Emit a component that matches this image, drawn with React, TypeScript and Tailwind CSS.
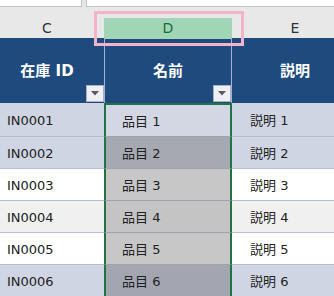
import React from "react";

const rows = [
  { id: "IN0001", name: "品目 1", desc: "説明 1", c: "bg-[#d0d5e4]", d: "bg-[#d3d6e3]" },
  { id: "IN0002", name: "品目 2", desc: "説明 2", c: "bg-[#d0d5e4]", d: "bg-[#a6a8b2]" },
  { id: "IN0003", name: "品目 3", desc: "説明 3", c: "bg-white", d: "bg-[#c7c7c7]" },
  { id: "IN0004", name: "品目 4", desc: "説明 4", c: "bg-[#f0f0f0]", d: "bg-[#c4c4c4]" },
  { id: "IN0005", name: "品目 5", desc: "説明 5", c: "bg-white", d: "bg-[#c7c7c7]" },
  { id: "IN0006", name: "品目 6", desc: "説明 6", c: "bg-[#d0d5e4]", d: "bg-[#a3a6b1]" },
];

function FilterButton() {
  return (
    <div className="absolute right-0 bottom-[1px] w-[18px] h-[17px] bg-[#eef0f4] border border-[#aab0c4] flex items-center justify-center">
      <svg width="8" height="5" viewBox="0 0 8 5">
        <polygon points="0,0 8,0 4,4.5" fill="#5a5a5a" />
      </svg>
    </div>
  );
}

export default function App() {
  const font = { fontFamily: '"DejaVu Sans", "Noto Sans CJK JP", sans-serif' };
  return (
    <div className="relative w-[334px] h-[296px] overflow-hidden bg-white" style={font}>
      {/* formula bar strip */}
      <div className="h-[8px] bg-[#e6e6e6] flex">
        <div className="w-[82px] h-[7px] bg-white border-r border-b border-[#c4c4c4]" />
        <div className="ml-[4px] flex-1 h-[7px] bg-white border-l border-b border-[#c4c4c4]" />
      </div>

      <div className="-ml-[10px] w-[368px]">
        {/* column letters */}
        <div className="h-[30px] bg-[#e8e8e8] flex items-end">
          <div className="w-[114px] h-[20px] flex items-center justify-center text-[14px] text-[#333]">C</div>
          <div className="w-[128px] h-[20px] flex flex-col">
            <div className="flex-1 bg-[#a0d5b6] flex items-center justify-center text-[14px] text-[#1d6b3c]">D</div>
            <div className="h-[2px] bg-[#1b5e40]" />
          </div>
          <div className="w-[126px] h-[20px] flex items-center justify-center text-[14px] text-[#333]">E</div>
        </div>

        {/* table header */}
        <div className="h-[65px] bg-[#1f4a7d] flex text-white font-bold text-[15px]">
          <div className="relative w-[114px] flex items-center justify-center pt-[1px]">
            在庫 ID
            <FilterButton />
          </div>
          <div className="relative w-[128px] flex items-center justify-center pt-[1px] border-x border-[#a7b1d0]">
            名前
            <FilterButton />
          </div>
          <div className="w-[126px] flex items-center justify-center pt-[1px]">説明</div>
        </div>

        {/* rows */}
        <div className="flex flex-col text-[13px] text-[#222]">
          {rows.map((r, i) => (
            <div key={r.id} className={`flex ${i === 0 ? "h-[33px]" : "h-[32px]"}`}>
              <div className={`w-[114px] ${r.c} ${i === 0 ? "" : "border-t border-[#b7bcd0]"} flex items-center pl-[17px] pt-[2px]`}>
                {r.id}
              </div>
              <div
                className={`w-[128px] ${r.d} border-x-2 border-x-[#217346] ${i === 0 ? "border-t-2 border-t-[#217346]" : "border-t border-t-[#9fa2ab]"} flex items-center pl-[16px] pt-[2px]`}
              >
                {r.name}
              </div>
              <div className={`w-[126px] ${r.c} ${i === 0 ? "" : "border-t border-[#b7bcd0]"} flex items-center pl-[18px] pt-[2px]`}>
                {r.desc}
              </div>
            </div>
          ))}
        </div>
      </div>

      {/* pink annotation box */}
      <div className="absolute left-[94px] top-[11px] w-[150px] h-[35px] border-[3px] border-[#f3b3ca]" />
    </div>
  );
}
